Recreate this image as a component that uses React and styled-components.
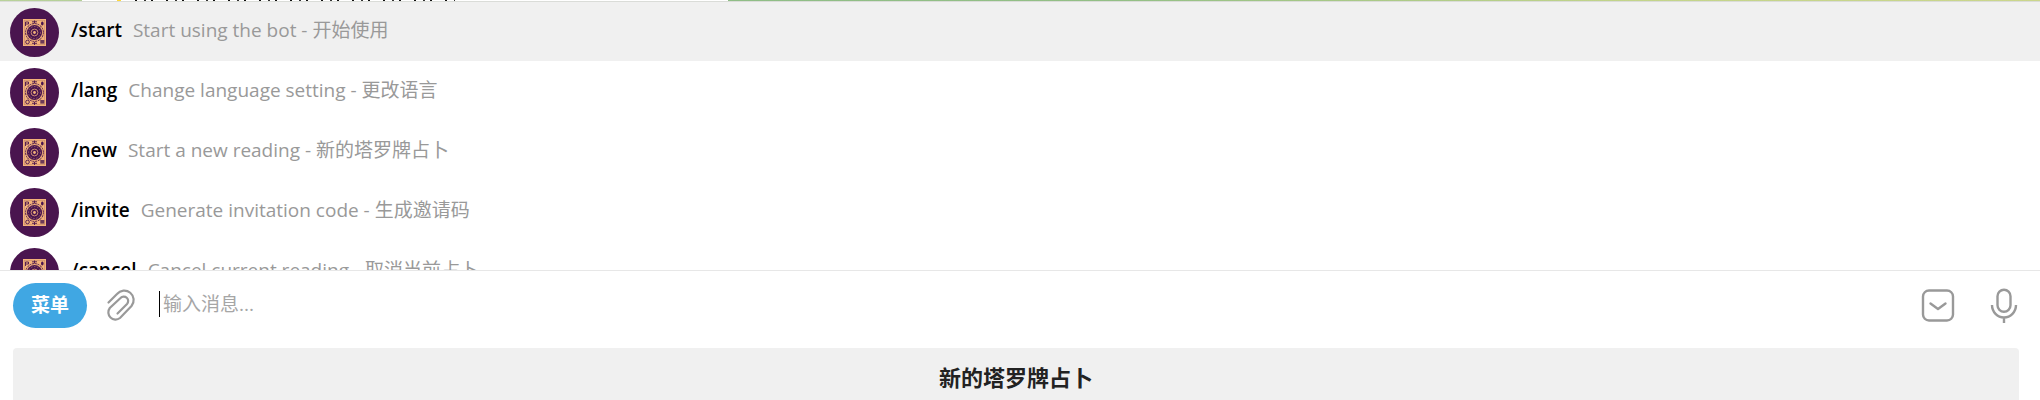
import React from "react";
import styled, { createGlobalStyle } from "styled-components";

const Global = createGlobalStyle`
  *, *::before, *::after { box-sizing: border-box; }
  html, body { margin: 0; height: 100%; overflow: hidden; }
  #root { height: 100%; }
  body {
    background: #fff;
    font-family: "Open Sans", "Noto Sans CJK SC", sans-serif;
    font-size: 19px;
  }
  button, input { font: inherit; }
`;

const Screen = styled.div`
  display: flex;
  flex-direction: column;
  height: 100%;
`;

const ChatEdge = styled.div`
  flex: none;
  height: 1px;
  padding-left: 4%;
  background: linear-gradient(90deg, #b9d29a 0%, #8fbd86 36%, #93bf85 55%, #c3d48a 80%, #cbd68c 100%);
`;

const BubbleEdge = styled.div`
  display: flex;
  width: 33%;
  height: 1px;
  background: #fff;
`;

const BubbleEmoji = styled.i`
  width: 4px;
  margin: 0 14px 0 35px;
  background: #ffd83b;
`;

const BubbleText = styled.i`
  width: 320px;
  background:
    repeating-linear-gradient(90deg, #111 0 2px, transparent 2px 9px, #333 9px 11px, transparent 11px 16px, #111 16px 18px, transparent 18px 31px);
`;

const CommandList = styled.ul`
  flex: none;
  height: 269px;
  margin: 0;
  padding: 0;
  list-style: none;
  overflow: hidden;
`;

const CommandRow = styled.li`
  display: flex;
  align-items: center;
  height: 60px;
  padding: 3px 10px 0;
  background: ${(p) => (p.$selected ? "#f0f0f0" : "#fff")};
  box-shadow: ${(p) => (p.$selected ? "inset 0 1px #dadcd8" : "none")};
`;

const Avatar = styled.svg`
  flex: none;
  width: 49px;
  height: 49px;
  margin-right: 12px;
`;

const CommandName = styled.span`
  margin: 0 11px 6px 0;
  font-weight: 600;
  line-height: 28px;
  color: #000;
`;

const CommandHint = styled.span`
  margin-bottom: 6px;
  line-height: 28px;
  color: #999;
`;

const Composer = styled.form`
  display: flex;
  align-items: center;
  flex: none;
  height: 70px;
  padding: 0 21px 0 13px;
  border-top: 1px solid #e7e7e7;
`;

const MenuButton = styled.button`
  width: 74px;
  height: 45px;
  padding: 0 0 3px;
  border: 0;
  border-radius: 23px;
  background: #40a7e3;
  color: #fff;
  font-weight: 700;
`;

const IconButton = styled.button`
  display: flex;
  padding: 0;
  border: 0;
  background: none;
  color: #999;
  margin-left: ${(p) => p.$gap}px;
`;

const MessageInput = styled.input`
  flex: 1;
  min-width: 0;
  height: 26px;
  margin: 0 0 4px 23px;
  padding: 0 0 0 3px;
  border: 0;
  border-left: 1px solid #000;
  outline: 0;
  background: none;
  caret-color: #000;
  &::placeholder { color: #a6a6a6; opacity: 1; }
`;

const Keyboard = styled.div`
  display: flex;
  padding: 8px 21px 0 13px;
`;

const KeyButton = styled.button`
  flex: 1;
  height: 60px;
  padding: 0 0 4px;
  border: 0;
  border-radius: 4px;
  background: #f0f0f0;
  color: #222;
  font-size: 22px;
  font-weight: 700;
`;

const commands = [
  ["/start", "Start using the bot - 开始使用"],
  ["/lang", "Change language setting - 更改语言"],
  ["/new", "Start a new reading - 新的塔罗牌占卜"],
  ["/invite", "Generate invitation code - 生成邀请码"],
  ["/cancel", "Cancel current reading - 取消当前占卜"],
];

function BotAvatar() {
  return (
    <Avatar viewBox="0 0 49 49" aria-hidden="true">
      <circle cx="24.5" cy="24.5" r="24.5" fill="#4a154f" />
      <rect x="13" y="11" width="23" height="27" fill="#f3b27a" />
      <rect x="14.3" y="12.3" width="20.400" height="24.400" fill="none" stroke="#c68a6c" strokeWidth="0.6" />
      <circle cx="24.5" cy="24.5" r="7.600" fill="#4a154f" />
      <circle cx="24.5" cy="24.5" r="8.900" fill="none" stroke="#4a154f" strokeWidth="1" strokeDasharray="2 0.8" />
      <g fill="none" stroke="#c98a72">
        <circle cx="24.5" cy="24.5" r="6" strokeWidth="0.6" strokeDasharray="1.5 1.5" />
        <circle cx="24.5" cy="24.5" r="3.4" strokeWidth="1" />
      </g>
      <circle cx="24.5" cy="24.5" r="1.4" fill="#f3b27a" />
      <g fill="none" stroke="#4a154f" strokeWidth="0.9">
        <path d="M15.5 14v4M15.5 14h3v2h-3M22 13.800h5M24.5 12.5v3M22 35.300h5M24.5 34v3" />
        <circle cx="17.5" cy="34" r="1.8" />
      </g>
      <ellipse cx="32.3" cy="15.5" rx="1.3" ry="2" fill="#4a154f" />
      <rect x="30.3" y="32" width="4" height="3.6" fill="#6d3a58" />
    </Avatar>
  );
}

export default function App() {
  return (
    <Screen>
      <Global />
      <ChatEdge>
        <BubbleEdge>
          <BubbleEmoji />
          <BubbleText />
        </BubbleEdge>
      </ChatEdge>
      <CommandList>
        {commands.map(([name, hint], i) => (
          <CommandRow key={name} $selected={i === 0}>
            <BotAvatar />
            <CommandName>{name}</CommandName>
            <CommandHint>{hint}</CommandHint>
          </CommandRow>
        ))}
      </CommandList>
      <Composer onSubmit={(e) => e.preventDefault()}>
        <MenuButton type="button">菜单</MenuButton>
        <IconButton type="button" aria-label="Attach" $gap={19}>
          <svg width="30" height="34" viewBox="0 0 30 34" fill="none" stroke="currentColor" strokeWidth="2.200" strokeLinecap="round">
            <path d="M2.500 13.500L11 5A9.200 9.200 0 0 1 25.500 17L14 29A7.200 7.200 0 0 1 3.800 19L14.500 9A4.400 4.400 0 0 1 21 15L11.500 24.500" />
          </svg>
        </IconButton>
        <MessageInput aria-label="输入消息" placeholder="输入消息..." />
        <IconButton type="button" aria-label="Bot keyboard" $gap={20}>
          <svg width="34" height="34" viewBox="0 0 34 34" fill="none" stroke="currentColor" strokeWidth="2.400" strokeLinecap="round" strokeLinejoin="round">
            <rect x="2" y="1.500" width="30" height="30" rx="6" />
            <path d="M9.500 14.500L17 20L24.500 14.500" />
          </svg>
        </IconButton>
        <IconButton type="button" aria-label="Voice message" $gap={34}>
          <svg width="30" height="36" viewBox="0 0 30 36" fill="none" stroke="currentColor" strokeWidth="2.400" strokeLinecap="butt">
            <rect x="8.500" y="1.800" width="13" height="22" rx="6.500" />
            <path d="M3 17A12 12.500 0 0 0 27 17M15 29v6" />
          </svg>
        </IconButton>
      </Composer>
      <Keyboard>
        <KeyButton type="button">新的塔罗牌占卜</KeyButton>
      </Keyboard>
    </Screen>
  );
}
